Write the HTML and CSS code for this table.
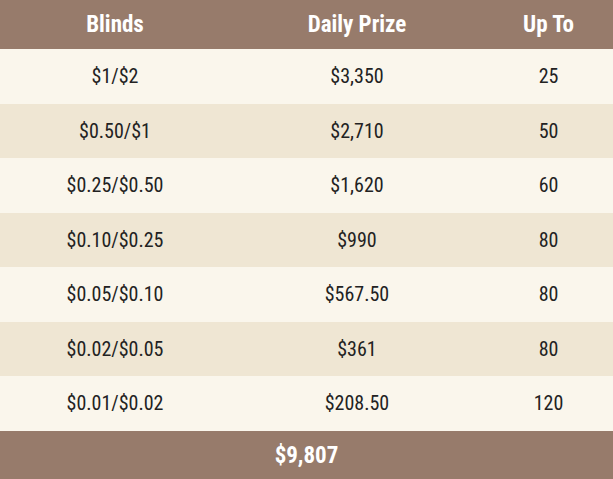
FILE: index.html
```html
<!DOCTYPE html>
<html>
<head>
<meta charset="utf-8">
<link rel="stylesheet" href="styles.css">
</head>
<body>
<table class="prizes">
  <colgroup><col class="c1"><col class="c2"><col class="c3"></colgroup>
  <thead>
    <tr><th>Blinds</th><th>Daily Prize</th><th>Up To</th></tr>
  </thead>
  <tbody>
    <tr><td>$1/$2</td><td>$3,350</td><td>25</td></tr>
    <tr><td>$0.50/$1</td><td>$2,710</td><td>50</td></tr>
    <tr><td>$0.25/$0.50</td><td>$1,620</td><td>60</td></tr>
    <tr><td>$0.10/$0.25</td><td>$990</td><td>80</td></tr>
    <tr><td>$0.05/$0.10</td><td>$567.50</td><td>80</td></tr>
    <tr><td>$0.02/$0.05</td><td>$361</td><td>80</td></tr>
    <tr><td>$0.01/$0.02</td><td>$208.50</td><td>120</td></tr>
  </tbody>
  <tfoot>
    <tr><td colspan="3">$9,807</td></tr>
  </tfoot>
</table>
</body>
</html>
```
FILE: styles.css
```css
html, body { margin: 0; padding: 0; background: #faf6ec; }
.prizes {
  width: 613px;
  border-collapse: collapse;
  table-layout: fixed;
  font-family: Roboto, "Liberation Sans", sans-serif;
  font-stretch: 75%;
}
.c1 { width: 230px; }
.c2 { width: 254px; }
.c3 { width: 129px; }
.prizes th {
  background: #977b6b;
  color: #fff;
  font-weight: 700;
  font-size: 23px;
  height: 49px;
  padding: 0;
  text-align: center;
}
.prizes td {
  height: 54.5px;
  padding: 0;
  text-align: center;
  font-size: 20px;
  font-weight: 400;
  color: #222;
}
.prizes tbody tr:nth-child(odd) td { background: #faf6ec; }
.prizes tbody tr:nth-child(even) td { background: #efe6d3; }
.prizes tfoot td {
  background: #977b6b;
  color: #fff;
  font-weight: 700;
  font-size: 23px;
  height: 49px;
}
```
